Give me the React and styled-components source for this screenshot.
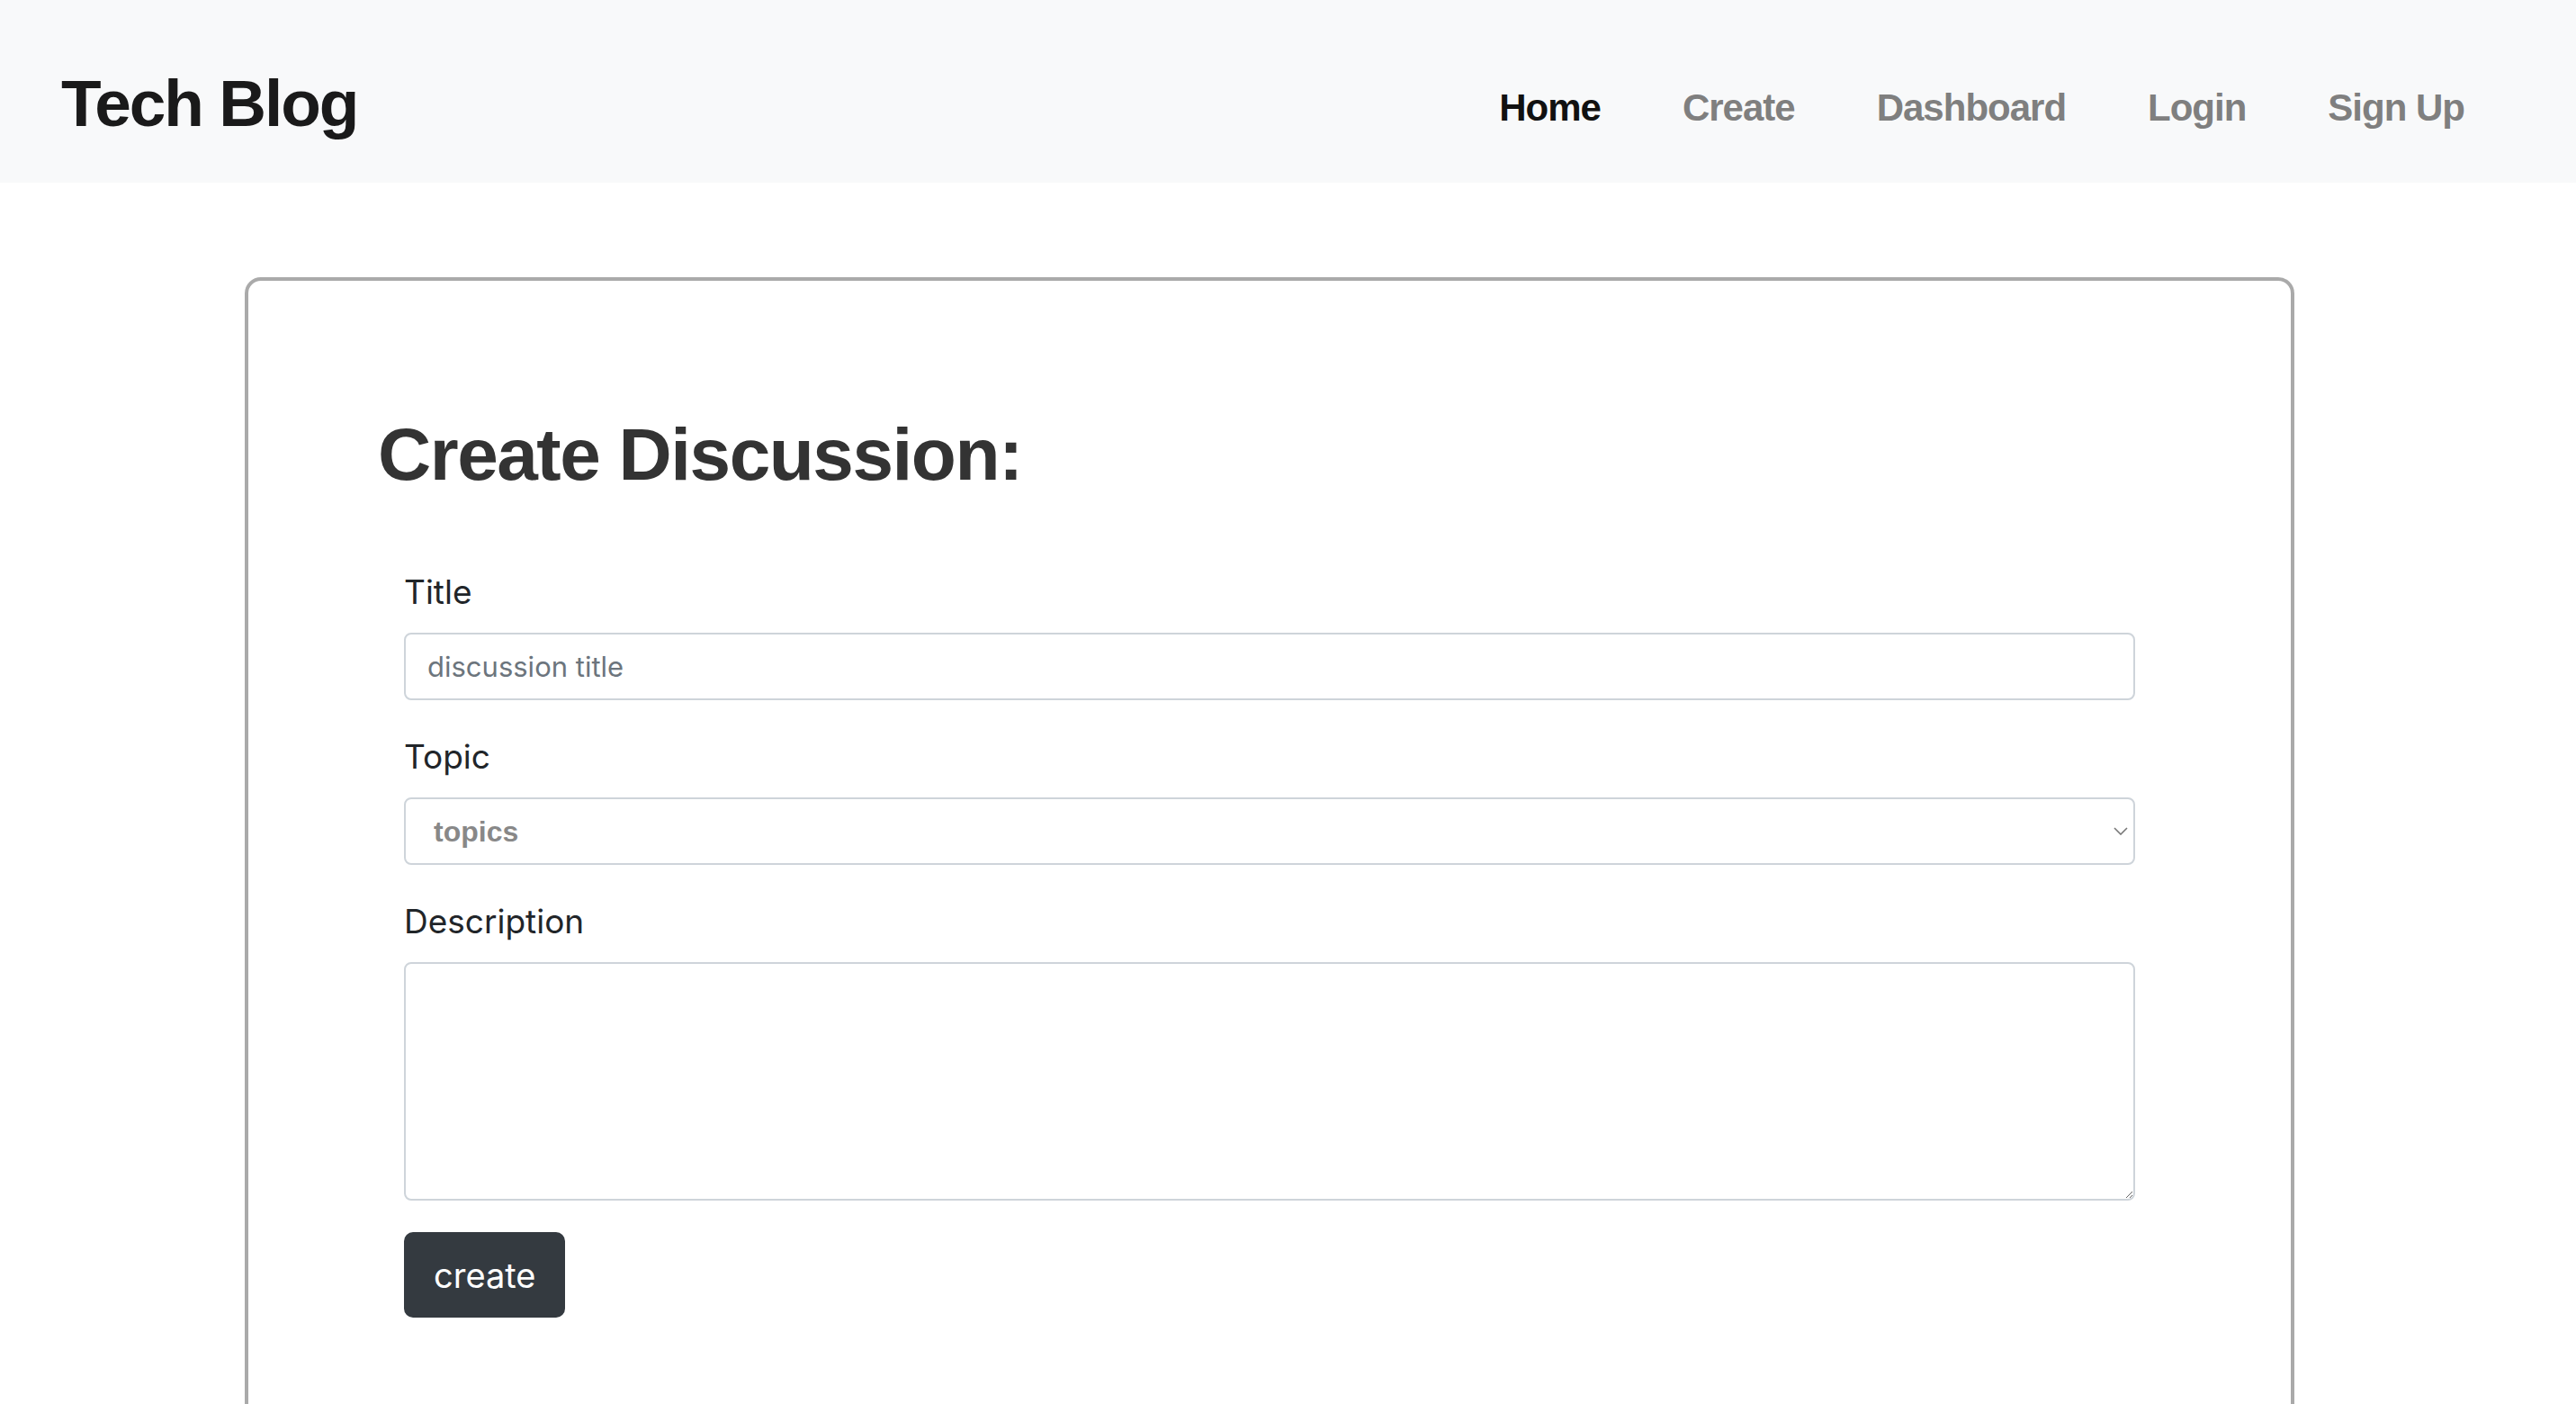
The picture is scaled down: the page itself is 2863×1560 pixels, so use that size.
import React from "react";
import styled, { createGlobalStyle } from "styled-components";

const GlobalStyle = createGlobalStyle`
  html, body {
    margin: 0;
    padding: 0;
    overflow: hidden;
    background: #fff;
  }
  body {
    font-family: "Liberation Sans", Arial, sans-serif;
    color: #212529;
  }
  * {
    box-sizing: border-box;
  }
`;

const links = ["Home", "Create", "Dashboard", "Login", "Sign Up"];

const CreateDiscussion = () => {
  return (
    <>
      <GlobalStyle />
      <Header>
        <Brand>Tech Blog</Brand>
        <Nav>
          {links.map((l, i) => (
            <NavLink key={l} $active={i === 0}>
              {l}
            </NavLink>
          ))}
        </Nav>
      </Header>
      <Card>
        <Heading>Create Discussion:</Heading>
        <Form onSubmit={(e) => e.preventDefault()}>
          <Group>
            <Label htmlFor="title">Title</Label>
            <Input id="title" type="text" placeholder="discussion title" />
          </Group>
          <Group>
            <Label htmlFor="topic">Topic</Label>
            <SelectWrap>
              <Select id="topic" defaultValue="">
                <option value="" disabled>
                  topics
                </option>
                <option>javascript</option>
                <option>react</option>
              </Select>
              <Chevron viewBox="0 0 16 9" fill="none">
                <path d="M1 1l7 7 7-7" stroke="#777" strokeWidth="1.6" />
              </Chevron>
            </SelectWrap>
          </Group>
          <Group>
            <Label htmlFor="desc">Description</Label>
            <TextArea id="desc" />
          </Group>
          <Button type="submit">create</Button>
        </Form>
      </Card>
    </>
  );
};

const Header = styled.header`
  height: 203px;
  background: #f8f9fa;
  display: flex;
  justify-content: space-between;
  align-items: flex-start;
  padding: 0 124px 0 68px;
`;

const Brand = styled.div`
  margin-top: 71px;
  font-size: 73px;
  line-height: 88px;
  font-weight: 700;
  letter-spacing: -2px;
  color: #1a1a1a;
`;

const Nav = styled.nav`
  margin-top: 95px;
  display: flex;
  gap: 91px;
`;

const NavLink = styled.a`
  font-size: 42px;
  line-height: 50px;
  font-weight: 700;
  letter-spacing: -1px;
  color: ${(p) => (p.$active ? "#111" : "#7f7f7f")};
  cursor: pointer;
`;

const Card = styled.main`
  width: 2278px;
  margin: 105px 0 0 272px;
  border: 4px solid #aaa;
  border-radius: 18px;
  padding: 144px 144px 144px;
`;

const Heading = styled.h1`
  margin: 0 0 74px;
  font-size: 82px;
  line-height: 98px;
  font-weight: 700;
  letter-spacing: -1.5px;
  color: #333;
`;

const Form = styled.form`
  margin: 0 29px;
  display: flex;
  flex-direction: column;
  align-items: flex-start;
  gap: 33px;
`;

const Group = styled.div`
  width: 100%;
  display: flex;
  flex-direction: column;
`;

const Label = styled.label`
  font-family: Inter, "Liberation Sans", sans-serif;
  font-size: 37px;
  line-height: 60px;
  margin-bottom: 15px;
  color: #212529;
`;

const controlBase = `
  width: 100%;
  border: 2px solid #ced4da;
  border-radius: 8px;
  background: #fff;
  outline: none;
  font-family: Inter, "Liberation Sans", sans-serif;
`;

const Input = styled.input`
  ${controlBase}
  height: 75px;
  padding: 0 24px;
  font-size: 31px;
  color: #495057;
  &::placeholder {
    color: #6c757d;
  }
`;

const SelectWrap = styled.div`
  position: relative;
  width: 100%;
`;

const Select = styled.select`
  ${controlBase}
  height: 75px;
  padding: 0 31px;
  appearance: none;
  font-family: "Liberation Sans", Arial, sans-serif;
  font-size: 32px;
  font-weight: 700;
  color: #888;
`;

const Chevron = styled.svg`
  position: absolute;
  right: 8px;
  top: 33px;
  width: 16px;
  height: 9px;
  pointer-events: none;
`;

const TextArea = styled.textarea`
  ${controlBase}
  height: 265px;
  padding: 12px 24px;
  font-size: 31px;
  resize: vertical;
`;

const Button = styled.button`
  margin-top: 2px;
  height: 95px;
  padding: 0 33px;
  border: none;
  border-radius: 10px;
  background: #343a40;
  color: #fff;
  font-family: Inter, "Liberation Sans", sans-serif;
  font-size: 38px;
  line-height: 60px;
  cursor: pointer;
`;

export default CreateDiscussion;
